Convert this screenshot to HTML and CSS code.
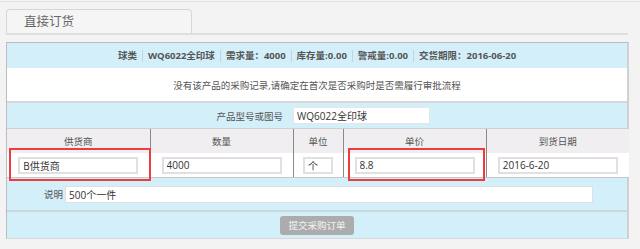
FILE: index.html
```html
<!DOCTYPE html>
<html lang="zh-CN">
<head>
    <meta charset="UTF-8">
    <title>直接订货</title>
    <link rel="stylesheet" href="styles.css">
</head>
<body>
    <div class="page">
        <div class="tabs">
            <div class="tab">直接订货</div>
        </div>
        <div class="panel">
            <div class="info">
                <span class="item">球类</span>
                <span class="item">WQ6022全印球</span>
                <span class="item">需求量：4000</span>
                <span class="item">库存量:0.00</span>
                <span class="item">警戒量:0.00</span>
                <span class="item">交货期限：2016-06-20</span>
            </div>
            <div class="notice">没有该产品的采购记录,请确定在首次是否采购时是否需履行审批流程</div>
            <table class="grid">
                <colgroup>
                    <col class="c-wide"><col class="c-wide"><col class="c-unit"><col class="c-wide"><col class="c-wide">
                </colgroup>
                <tr class="row-blue">
                    <td colspan="2" class="label">产品型号或图号</td>
                    <td colspan="3" class="left"><input class="txt txt-product" type="text" value="WQ6022全印球"></td>
                </tr>
                <tr class="row-head">
                    <th>供货商</th>
                    <th>数量</th>
                    <th>单位</th>
                    <th>单价</th>
                    <th>到货日期</th>
                </tr>
                <tr class="row-data">
                    <td class="mark-cell"><input class="txt" type="text" value="B供货商"><span class="mark mark-a"></span></td>
                    <td><input class="txt" type="text" value="4000"></td>
                    <td><input class="txt txt-unit" type="text" value="个"></td>
                    <td class="mark-cell"><input class="txt" type="text" value="8.8"><span class="mark mark-b"></span></td>
                    <td><input class="txt" type="text" value="2016-6-20"></td>
                </tr>
            </table>
            <div class="note-row">
                <span class="note-label">说明</span>
                <input class="txt txt-note" type="text" value="500个一件">
            </div>
            <div class="actions">
                <button class="btn-submit" type="button">提交采购订单</button>
            </div>
        </div>
    </div>
</body>
</html>
```

FILE: styles.css
```css
body {
    margin: 0;
    background-color: #f3f3f3;
    font-family: "Open Sans", "Noto Sans CJK SC", sans-serif;
    font-size: 9.5px;
    color: #555;
}
.page {
    border-top: 1px solid #e2e2e2;
    margin-top: 1px;
    padding: 7px 12px 0 6px;
}
.tabs {
    border-bottom: 2px solid #dedede;
    height: 24px;
}
.tab {
    box-sizing: border-box;
    width: 186px;
    height: 24px;
    line-height: 24px;
    padding-left: 17px;
    background-color: #f5f5f5;
    border: 1px solid #d6d6d6;
    border-bottom: none;
    border-radius: 4px 4px 0 0;
    font-size: 12.5px;
    color: #666;
}
.panel {
    margin-top: 7px;
    width: 620px;
    border: 1px solid #bcbcbc;
    border-right: 2px solid #d0d0d0;
    border-bottom: 1px solid #d8d8d8;
    background-color: #d3eff9;
}

/* top info bar */
.info {
    height: 25px;
    display: flex;
    justify-content: center;
    align-items: center;
    font-size: 9.5px;
    font-weight: bold;
    color: #555;
}
.info .item {
    padding: 0 5px;
    border-left: 1px solid #c4d4da;
    line-height: 12px;
}
.info .item:first-child {
    border-left: none;
}
.notice {
    height: 33px;
    line-height: 35px;
    background-color: #fff;
    text-align: center;
    border-bottom: 2px solid #d8d8d8;
}

/* main grid */
.grid {
    width: 620px;
    border-collapse: collapse;
    table-layout: fixed;
}
.c-wide { width: 143px; }
.c-unit { width: 50px; }
.grid td, .grid th {
    padding: 0;
    text-align: center;
}
.row-blue td {
    height: 25px;
}
.row-blue .label {
    text-align: right;
    padding-right: 10px;
}
.row-blue .left {
    text-align: left;
}
.row-head th {
    height: 24px;
    background-color: #f0eef0;
    font-weight: normal;
    color: #555;
    border-top: 1px solid #cfcfcf;
    border-left: 1px solid #8a8a8a;
}
.row-data td {
    height: 24px;
    background-color: #fff;
    border-left: 1px solid #8a8a8a;
    border-bottom: 1px solid #c8c8c8;
}
.row-head th:first-child, .row-data td:first-child {
    border-left: none;
}
.txt {
    box-sizing: border-box;
    width: 120px;
    height: 17px;
    padding: 0 3px;
    border: 2px solid #e0e0e0;
    background-color: #fff;
    font-family: "Open Sans", "Noto Sans CJK SC", sans-serif;
    font-size: 10px;
    color: #333;
    vertical-align: middle;
}
.txt-unit { width: 30px; }
.txt-product {
    width: 137px;
    border-width: 1px;
    border-color: #e6e6e6;
}

/* red highlight frames */
.mark-cell {
    position: relative;
}
.mark {
    position: absolute;
    top: -5px;
    height: 29px;
    border: 2px solid #ee3b3b;
    pointer-events: none;
}
.mark-a { left: 2px; width: 138px; }
.mark-b { left: 4px; width: 133px; }

.note-row {
    height: 32px;
    display: flex;
    align-items: center;
    padding-left: 37px;
    border-bottom: 2px solid #cad8de;
}
.note-label {
    width: 21px;
}
.txt-note {
    width: 528px;
    border-width: 1px;
    border-color: #e0e0e0;
}
.actions {
    height: 26px;
    display: flex;
    justify-content: center;
    align-items: center;
}
.btn-submit {
    height: 19px;
    padding: 0 8px;
    border: none;
    border-radius: 3px;
    background-color: #acacac;
    color: #f4f4f4;
    font-family: "Open Sans", "Noto Sans CJK SC", sans-serif;
    font-size: 9.5px;
}
```
